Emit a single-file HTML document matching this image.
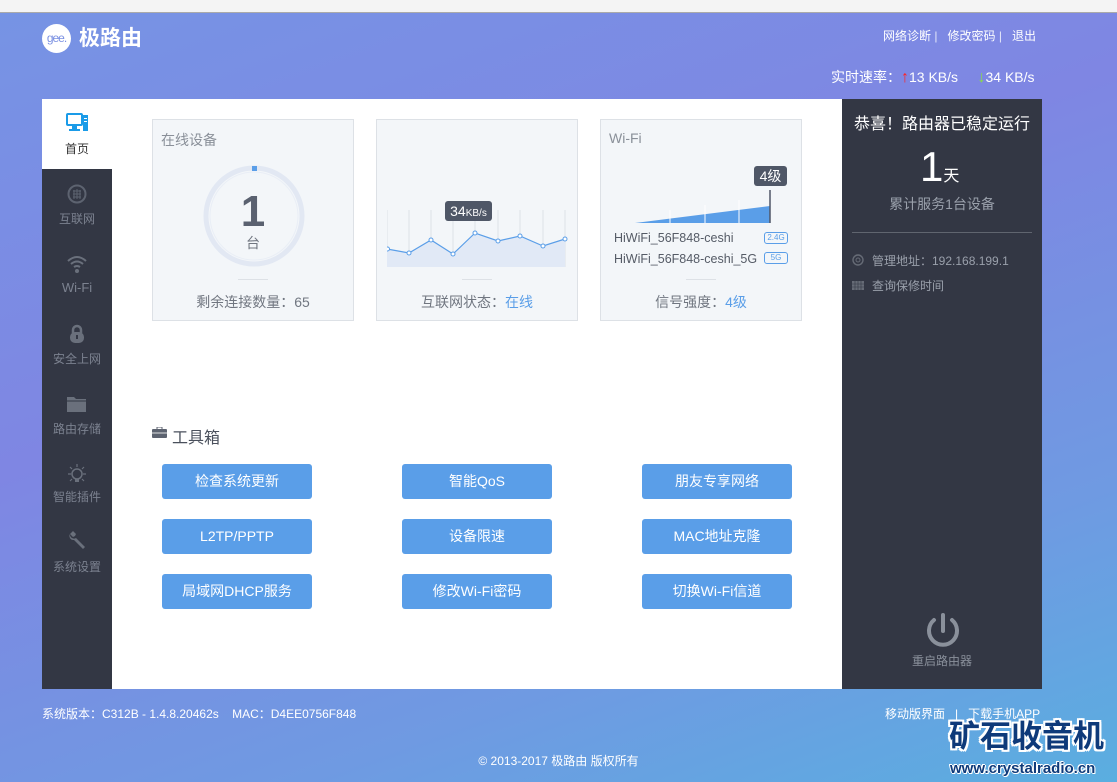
<!DOCTYPE html>
<html style="width:1117px;height:782px;overflow:hidden"><head><meta charset="utf-8"><style>
*{margin:0;padding:0;box-sizing:border-box}
body{width:1117px;height:782px;overflow:hidden;font-family:"Liberation Sans","Noto Sans CJK SC",sans-serif;position:relative;background:linear-gradient(160deg,#7694e4 0%,#7f86e3 40%,#6f9ae2 75%,#5aaee0 100%)}
.top{position:absolute;left:0;top:0;width:1117px;height:13px;background:#f4f4f4;border-bottom:1px solid #aaa}
.abs{position:absolute;white-space:nowrap}
.w{color:#fff}
.panel{position:absolute;left:42px;top:99px;width:800px;height:590px;background:#fff}
.side{position:absolute;left:42px;top:169px;width:70px;height:520px;background:#333744}
.nav{position:absolute;left:42px;width:70px;text-align:center;font-size:12px;color:#7c8290}
.card{position:absolute;top:119px;width:202px;height:202px;background:#f3f6f9;border:1px solid #dde1e6}
.card .t{position:absolute;left:8px;top:10px;font-size:14px;color:#8a9099}
.card .b{position:absolute;left:0;width:100%;top:172px;text-align:center;font-size:14px;color:#707680}
.card .ln{position:absolute;left:85px;top:159px;width:30px;height:1px;background:#dde1e6}
.btn{position:absolute;width:150px;height:35px;background:#5a9ee8;border-radius:3px;color:#fff;font-size:14px;text-align:center;line-height:35px}
.right{position:absolute;left:842px;top:99px;width:200px;height:590px;background:#333744}
</style></head><body>
<div class="top"></div>
<div class="abs" style="left:42px;top:24px;width:29px;height:29px;border-radius:50%;background:#fff;color:#7a90e2;font-size:12px;line-height:29px;text-align:center;letter-spacing:-1px">gee.</div>
<div class="abs w" style="left:79px;top:24px;font-size:21px;font-weight:bold;line-height:29px">极路由</div>
<div class="abs w" style="left:883px;top:27px;font-size:12px">网络诊断 <span style="opacity:.8">|</span>&nbsp;&nbsp; 修改密码 <span style="opacity:.8">|</span>&nbsp;&nbsp; 退出</div>
<div class="abs w" style="left:831px;top:67px;font-size:14px">实时速率：<b style="color:#f22;font-size:16px">↑</b>13 KB/s &nbsp;&nbsp;&nbsp;&nbsp;<b style="color:#8d4;font-size:16px">↓</b>34 KB/s</div>

<div class="panel"></div>
<div class="side"></div>
<svg class="abs" style="left:66px;top:113px" width="23" height="20" viewBox="0 0 23 20"><rect x="1" y="1" width="15" height="11" rx="1" fill="none" stroke="#1a9be8" stroke-width="2"/><rect x="6" y="13" width="5" height="3" fill="#1a9be8"/><rect x="3" y="16" width="11" height="2" fill="#1a9be8"/><rect x="17" y="2" width="5" height="16" fill="#1a9be8"/><rect x="18" y="5" width="3" height="1" fill="#fff"/><rect x="18" y="8" width="3" height="1" fill="#fff"/></svg>
<div class="nav" style="top:140px;color:#333;font-size:12px">首页</div>
<svg class="abs" style="left:67px;top:184px" width="20" height="20"><circle cx="10" cy="10" r="8.5" fill="none" stroke="#5d6370" stroke-width="2"/><path d="M6 7h8M6 10h8M6 13h8M7 6v9M10 5v10M13 6v9" stroke="#5d6370" stroke-width="1"/></svg>
<div class="nav" style="top:210px">互联网</div>
<svg class="abs" style="left:66px;top:254px" width="22" height="20"><path d="M2 7Q11-1 20 7M5 10Q11 5 17 10M8 13Q11 11 14 13" stroke="#6a707c" stroke-width="2" fill="none"/><circle cx="11" cy="17" r="2" fill="#6a707c"/></svg>
<div class="nav" style="top:280px;font-size:13px">Wi-Fi</div>
<svg class="abs" style="left:69px;top:324px" width="16" height="20"><path d="M4 9V6a4 4 0 0 1 8 0v3" stroke="#6a707c" stroke-width="2.5" fill="none"/><rect x="1" y="8" width="14" height="11" rx="5" fill="#6a707c"/><rect x="7" y="11" width="2" height="4" fill="#333744"/></svg>
<div class="nav" style="top:350px">安全上网</div>
<svg class="abs" style="left:66px;top:396px" width="22" height="17"><path d="M1 1h7l2 2h10v13H1z" fill="#6a707c"/><path d="M1 5h20" stroke="#333744"/></svg>
<div class="nav" style="top:420px">路由存储</div>
<svg class="abs" style="left:66px;top:463px" width="22" height="22"><circle cx="11" cy="11" r="5" stroke="#6a707c" stroke-width="1.5" fill="none"/><rect x="9" y="16" width="4" height="3" fill="#6a707c"/><path d="M11 1v3M2 11h3M17 11h3M4 4l2 2M18 4l-2 2M4 18l2-2M18 18l-2-2" stroke="#6a707c" stroke-width="1.2"/></svg>
<div class="nav" style="top:488px">智能插件</div>
<svg class="abs" style="left:67px;top:530px" width="20" height="20"><path d="M3 4a4 4 0 0 0 6 4l9 9-2 2-9-9a4 4 0 0 1-4-6l3 3 2-1 1-2-3-3" fill="#6a707c"/></svg>
<div class="nav" style="top:558px">系统设置</div>

<div class="card" style="left:152px"><div class="t">在线设备</div>
<svg class="abs" style="left:50px;top:45px" width="102" height="102"><circle cx="51" cy="51" r="48" fill="none" stroke="#e2e8f3" stroke-width="5"/><circle cx="51" cy="51" r="44" fill="none" stroke="#e9eef6" stroke-width="1"/><rect x="49" y="1" width="5" height="5" fill="#5a9ee8"/></svg>
<div class="abs" style="left:0;width:100%;text-align:center;top:68px;font-size:44px;font-weight:bold;color:#5a6170;line-height:48px">1</div>
<div class="abs" style="left:0;width:100%;text-align:center;top:113px;font-size:14px;color:#707680">台</div>
<div class="ln"></div><div class="b">剩余连接数量：65</div></div>

<div class="card" style="left:376px">
<svg class="abs" style="left:10px;top:80px" width="182" height="70"><path d="M0 10V67M22 10V67M44 10V67M66 10V67M88 10V67M111 10V67M133 10V67M156 10V67M178 10V67" stroke="#dde1e7"/><path d="M0 49L22 53L44 40L66 54L88 33L111 41L133 36L156 46L178 39V67H0Z" fill="#e1e9f6"/><path d="M0 49L22 53L44 40L66 54L88 33L111 41L133 36L156 46L178 39" stroke="#5a9ee8" stroke-width="1.2" fill="none"/><g fill="#fff" stroke="#5a9ee8"><circle cx="0.5" cy="49" r="2"/><circle cx="22" cy="53" r="2"/><circle cx="44" cy="40" r="2"/><circle cx="66" cy="54" r="2"/><circle cx="88" cy="33" r="2"/><circle cx="111" cy="41" r="2"/><circle cx="133" cy="36" r="2"/><circle cx="156" cy="46" r="2"/><circle cx="178" cy="39" r="2"/></g></svg>
<div class="abs" style="left:68px;top:81px;width:47px;height:20px;background:#4f5767;border-radius:3px;color:#fff;font-size:14px;line-height:20px;text-align:center">34<span style="font-size:10px">KB/s</span></div>
<div class="ln"></div><div class="b">互联网状态：<span style="color:#5a9ee8">在线</span></div></div>

<div class="card" style="left:600px"><div class="t">Wi-Fi</div>
<svg class="abs" style="left:34px;top:70px" width="140" height="35"><path d="M0 33L135 16V33Z" fill="#5a9ee8"/><path d="M35 20V33M70 15V33M104 10V33" stroke="#fff"/><path d="M135 0V33" stroke="#4f5767" stroke-width="1.5"/></svg>
<div class="abs" style="left:153px;top:46px;width:33px;height:20px;background:#4f5767;border-radius:3px;color:#fff;font-size:14px;line-height:20px;text-align:center">4级</div>
<div class="abs" style="left:13px;top:111px;font-size:12.5px;color:#555b66">HiWiFi_56F848-ceshi</div>
<div class="abs" style="left:13px;top:132px;font-size:12.5px;color:#555b66">HiWiFi_56F848-ceshi_5G</div>
<div class="abs" style="left:163px;top:112px;width:24px;height:12px;border:1px solid #5a9ee8;border-radius:3px;font-size:8px;color:#5a9ee8;text-align:center;line-height:10px">2.4G</div>
<div class="abs" style="left:163px;top:132px;width:24px;height:12px;border:1px solid #5a9ee8;border-radius:3px;font-size:8px;color:#5a9ee8;text-align:center;line-height:10px">5G</div>
<div class="ln"></div><div class="b">信号强度：<span style="color:#5a9ee8">4级</span></div></div>

<svg class="abs" style="left:152px;top:427px" width="15" height="11"><rect x="0" y="2" width="15" height="9" rx="1" fill="#5d6370"/><rect x="5" y="0" width="5" height="3" fill="none" stroke="#5d6370"/><path d="M0 6h15" stroke="#fff" stroke-width=".8"/></svg>
<div class="abs" style="left:172px;top:424px;font-size:16px;color:#4a505c">工具箱</div>
<div class="btn" style="left:162px;top:464px">检查系统更新</div>
<div class="btn" style="left:402px;top:464px">智能QoS</div>
<div class="btn" style="left:642px;top:464px">朋友专享网络</div>
<div class="btn" style="left:162px;top:519px">L2TP/PPTP</div>
<div class="btn" style="left:402px;top:519px">设备限速</div>
<div class="btn" style="left:642px;top:519px">MAC地址克隆</div>
<div class="btn" style="left:162px;top:574px">局域网DHCP服务</div>
<div class="btn" style="left:402px;top:574px">修改Wi-Fi密码</div>
<div class="btn" style="left:642px;top:574px">切换Wi-Fi信道</div>

<div class="right"></div>
<div class="abs w" style="left:842px;width:200px;text-align:center;top:110px;font-size:16px">恭喜！路由器已稳定运行</div>
<div class="abs w" style="left:920px;top:143px;font-size:42px;line-height:48px">1<span style="font-size:16px">天</span></div>
<div class="abs" style="left:842px;width:200px;text-align:center;top:194px;font-size:14px;color:#9aa0ab">累计服务1台设备</div>
<div class="abs" style="left:852px;top:232px;width:180px;height:1px;background:#60656f"></div>
<svg class="abs" style="left:852px;top:254px" width="12" height="12"><circle cx="6" cy="6" r="5" stroke="#666b76" fill="none" stroke-width="1.4"/><circle cx="6" cy="6" r="2" stroke="#666b76" fill="none"/></svg>
<div class="abs" style="left:872px;top:252px;font-size:12px;color:#9aa0ab">管理地址：192.168.199.1</div>
<svg class="abs" style="left:852px;top:281px" width="12" height="9"><rect width="12" height="9" fill="#666b76"/><path d="M0 3h12M0 6h12M3 0v9M6 0v9M9 0v9" stroke="#333744" stroke-width=".6"/></svg>
<div class="abs" style="left:872px;top:277px;font-size:12px;color:#9aa0ab">查询保修时间</div>
<svg class="abs" style="left:924px;top:612px" width="38" height="38"><path d="M10 8A14 14 0 1 0 28 8" stroke="#8a909b" stroke-width="4" fill="none" stroke-linecap="round"/><path d="M19 3V19" stroke="#8a909b" stroke-width="4" stroke-linecap="round"/></svg>
<div class="abs" style="left:842px;width:200px;text-align:center;top:652px;font-size:12px;color:#8a909b">重启路由器</div>

<div class="abs w" style="left:42px;top:705px;font-size:12px">系统版本：C312B - 1.4.8.20462s &nbsp;&nbsp;&nbsp;MAC：D4EE0756F848</div>
<div class="abs w" style="left:885px;top:705px;font-size:12px">移动版界面 &nbsp;&nbsp;| &nbsp;&nbsp;下载手机APP</div>
<div class="abs w" style="left:0;width:1117px;text-align:center;top:752px;font-size:12px">© 2013-2017 极路由 版权所有</div>
<div class="abs" style="left:949px;top:718px;font-size:31px;line-height:38px;font-weight:bold;color:#0e3a7a;text-shadow:2px 0 #fff,-2px 0 #fff,0 2px #fff,0 -2px #fff,2px 2px #fff,-2px -2px #fff,2px -2px #fff,-2px 2px #fff">矿石收音机</div>
<div class="abs" style="left:950px;top:760px;font-size:15px;line-height:18px;font-weight:bold;color:#0e3a7a;text-shadow:1px 0 #fff,-1px 0 #fff,0 1px #fff,0 -1px #fff,1px 1px #fff,-1px -1px #fff">www.crystalradio.cn</div>
</body></html>
